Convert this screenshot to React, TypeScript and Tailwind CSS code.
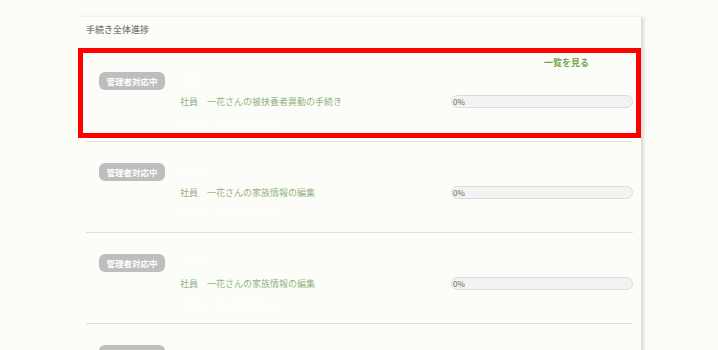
const rows = [
  { id: 1, title: '社員　一花さんの被扶養者異動の手続き', head: true },
  { id: 2, title: '社員　一花さんの家族情報の編集', head: false },
  { id: 3, title: '社員　一花さんの家族情報の編集', head: false },
  { id: 4, title: '社員　一花さんの家族情報の編集', head: false },
]

const font = { fontFamily: '"Noto Sans CJK JP", "Noto Sans", sans-serif' }

const ProgressBar = () => (
  <div className="flex h-[13px] w-[182px] items-center rounded-full border border-[#dcdcdc] bg-[#f3f3f3] pl-[1px] text-[8px] leading-none text-[#666]">
    0%
  </div>
)

const Row = ({ title, head }: { title: string; head: boolean }) => (
  <div className="relative flex h-[91px] border-b border-[#dedede] pl-[13px]">
    {head && (
      <>
        <div className="pointer-events-none absolute -left-2 -right-2 top-[-3px] bottom-[3px] border-[5px] border-[#f00]" />
        <a className="absolute right-[44px] top-[5px] text-[9px] font-bold text-[#74a653]">一覧を見る</a>
      </>
    )}
    <div className="mt-[21px] flex h-[18px] w-[66px] items-center justify-center rounded-[6px] bg-[#bebebe] text-[8.5px] font-bold text-white">
      管理者対応中
    </div>
    <div className="ml-[15px] flex flex-1 flex-col pt-[19px] text-[9px] leading-[21px]">
      <div className="text-white">受付中</div>
      <div className="flex items-center justify-between">
        <span className="text-[#94b283]">{title}</span>
        <ProgressBar />
      </div>
      <div className="text-white">提出日：2020年06月19日</div>
    </div>
  </div>
)

export default function App() {
  return (
    <div className="h-[350px] w-[718px] overflow-hidden bg-[#fbfdf6]" style={font}>
      <div className="ml-[78px] mt-[17px] w-[563px] bg-[#fcfdf8] px-2 shadow-[3px_0_3px_rgba(0,0,0,0.13)]">
        <div className="flex h-[34px] items-start pt-[6px] text-[9px] font-medium text-[#7a7a7a]">手続き全体進捗</div>
        {rows.map((r) => (
          <Row key={r.id} title={r.title} head={r.head} />
        ))}
      </div>
    </div>
  )
}
